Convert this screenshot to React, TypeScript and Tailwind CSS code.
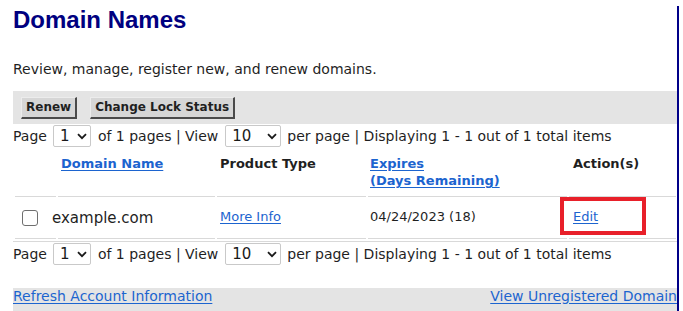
import React from 'react';

const PageSelect: React.FC<{ value: string; options: string[]; width: string }> = ({ value, options, width }) => (
  <div className={`relative h-[22px] ${width}`}>
    <select
      defaultValue={value}
      className="appearance-none w-full h-full bg-white border border-[#c9c9c9] rounded-[2px] pl-[6px] text-[15px] leading-[20px] text-[#1a1a1a] outline-none"
    >
      {options.map((o) => (
        <option key={o} value={o}>
          {o}
        </option>
      ))}
    </select>
    <svg
      className="absolute right-[4px] top-[8px] pointer-events-none"
      width="10"
      height="7"
      viewBox="0 0 10 7"
      fill="none"
    >
      <path d="M1 1.2 L5 5.2 L9 1.2" stroke="#1a1a1a" strokeWidth="1.8" />
    </svg>
  </div>
);

const Pager: React.FC = () => (
  <div className="flex items-center h-[24px] text-[14px] leading-[17px] text-[#1f1f1f] whitespace-nowrap">
    <span>Page</span>
    <div className="ml-[6px] mr-[7px]">
      <PageSelect value="1" options={['1']} width="w-[38px]" />
    </div>
    <span>of 1 pages | View</span>
    <div className="ml-[7px] mr-[6px]">
      <PageSelect value="10" options={['10', '25', '50']} width="w-[56px]" />
    </div>
    <span>per page | Displaying 1 - 1 out of 1 total items</span>
  </div>
);

export default function App() {
  const cols = 'grid grid-cols-[41px_157px_149px_199px_107px] gap-x-[2px] ml-[2px]';
  const link = 'text-[#1c64cf] underline underline-offset-[2px]';
  const btn =
    'h-[22px] px-[4px] bg-[#d6d6d6] border-t border-l border-t-[#ececec] border-l-[#ececec] border-r-2 border-b-2 border-r-[#4a4a4a] border-b-[#4a4a4a] text-[12px] font-bold text-[#1f1f1f] leading-[18px]';

  return (
    <div className="w-[683px] h-[311px] overflow-hidden bg-white font-['DejaVu_Sans',Verdana,sans-serif]">
      <div className="w-[679px] h-full border-r-2 border-[#000088] pl-[13px]">
        <h1 className="mt-[6px] h-[28px] text-[24px] leading-[28px] font-bold text-[#000080] font-['Liberation_Sans',Arial,sans-serif]">
          Domain Names
        </h1>

        <p className="mt-[27px] text-[14px] leading-[17px] text-[#1f1f1f]">
          Review, manage, register new, and renew domains.
        </p>

        {/* toolbar */}
        <div className="mt-[13px] h-[33px] bg-[#e4e4e4] flex items-center pl-[8px] gap-[13px]">
          <button className={btn}>Renew</button>
          <button className={btn}>Change Lock Status</button>
        </div>

        <Pager />

        {/* table header */}
        <div className={`${cols} mt-[7px] h-[41px] text-[13px] leading-[17px] font-bold text-[#1f1f1f]`}>
          <div />
          <div className="pl-[3px]">
            <a href="#" className={link}>Domain Name</a>
          </div>
          <div className="pl-[3px]">Product Type</div>
          <div className="pl-[2px]">
            <a href="#" className={link}>
              Expires
              <br />
              (Days Remaining)
            </a>
          </div>
          <div className="pl-[4px]">Action(s)</div>
        </div>

        {/* row */}
        <div className={`${cols} h-[43px] text-[13px] leading-[17px] text-[#1f1f1f]`}>
          <div className="flex items-center pl-[7px] border-y border-[#d9d9d9] whitespace-nowrap">
            <input
              type="checkbox"
              className="appearance-none shrink-0 w-[16px] h-[16px] border border-[#6f6f6f] rounded-[3px] bg-white"
            />
            <span className="ml-[14px] text-[15px] leading-[18px]">example.com</span>
          </div>
          <div className="border-y border-[#d9d9d9]" />
          <div className="flex items-center pl-[3px] border-y border-[#d9d9d9] pb-[2px]">
            <a href="#" className={link}>More Info</a>
          </div>
          <div className="flex items-center pl-[2px] border-y border-[#d9d9d9] pb-[2px]">
            04/24/2023 (18)
          </div>
          <div className="relative flex items-center pl-[4px] border-y border-[#d9d9d9] pb-[2px]">
            <a href="#" className={link}>Edit</a>
            <div className="absolute left-[-9px] top-0 w-[86px] h-[38px] border-4 border-[#e8202a]" />
          </div>
        </div>

        <div className="mt-[2px] border-t border-[#d9d9d9]">
          <Pager />
        </div>

        {/* footer */}
        <div className="mt-[22px] h-[30px] bg-[#e4e4e4] flex justify-between text-[14px] leading-[17px] whitespace-nowrap">
          <a href="#" className={link}>Refresh Account Information</a>
          <a href="#" className={link}>View Unregistered Domain</a>
        </div>
      </div>
    </div>
  );
}
